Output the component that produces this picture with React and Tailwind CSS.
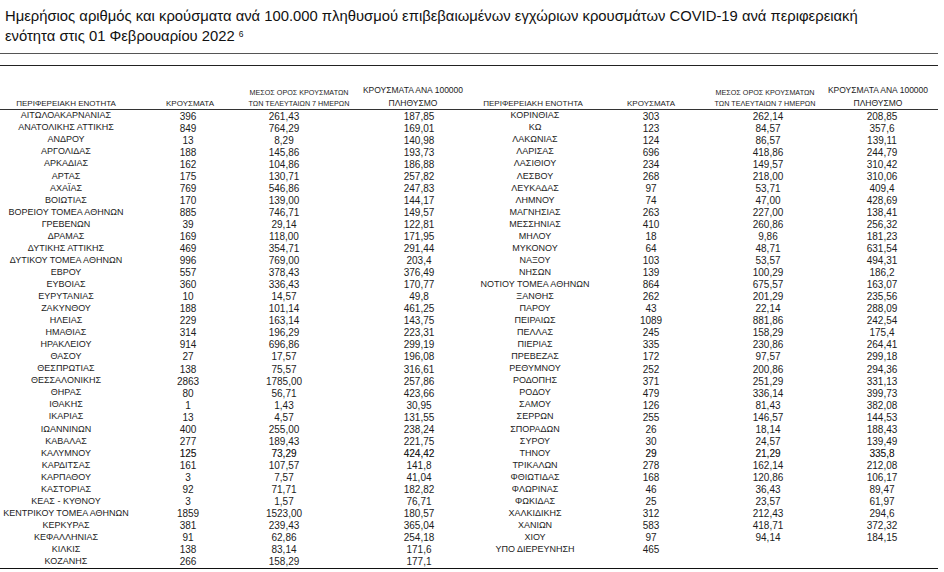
import React from "react";

const leftRows = [
  ["ΑΙΤΩΛΟΑΚΑΡΝΑΝΙΑΣ", "396", "261,43", "187,85"],
  ["ΑΝΑΤΟΛΙΚΗΣ ΑΤΤΙΚΗΣ", "849", "764,29", "169,01"],
  ["ΑΝΔΡΟΥ", "13", "8,29", "140,98"],
  ["ΑΡΓΟΛΙΔΑΣ", "188", "145,86", "193,73"],
  ["ΑΡΚΑΔΙΑΣ", "162", "104,86", "186,88"],
  ["ΑΡΤΑΣ", "175", "130,71", "257,82"],
  ["ΑΧΑΪΑΣ", "769", "546,86", "247,83"],
  ["ΒΟΙΩΤΙΑΣ", "170", "139,00", "144,17"],
  ["ΒΟΡΕΙΟΥ ΤΟΜΕΑ ΑΘΗΝΩΝ", "885", "746,71", "149,57"],
  ["ΓΡΕΒΕΝΩΝ", "39", "29,14", "122,81"],
  ["ΔΡΑΜΑΣ", "169", "118,00", "171,95"],
  ["ΔΥΤΙΚΗΣ ΑΤΤΙΚΗΣ", "469", "354,71", "291,44"],
  ["ΔΥΤΙΚΟΥ ΤΟΜΕΑ ΑΘΗΝΩΝ", "996", "769,00", "203,4"],
  ["ΕΒΡΟΥ", "557", "378,43", "376,49"],
  ["ΕΥΒΟΙΑΣ", "360", "336,43", "170,77"],
  ["ΕΥΡΥΤΑΝΙΑΣ", "10", "14,57", "49,8"],
  ["ΖΑΚΥΝΘΟΥ", "188", "101,14", "461,25"],
  ["ΗΛΕΙΑΣ", "229", "163,14", "143,75"],
  ["ΗΜΑΘΙΑΣ", "314", "196,29", "223,31"],
  ["ΗΡΑΚΛΕΙΟΥ", "914", "696,86", "299,19"],
  ["ΘΑΣΟΥ", "27", "17,57", "196,08"],
  ["ΘΕΣΠΡΩΤΙΑΣ", "138", "75,57", "316,61"],
  ["ΘΕΣΣΑΛΟΝΙΚΗΣ", "2863", "1785,00", "257,86"],
  ["ΘΗΡΑΣ", "80", "56,71", "423,66"],
  ["ΙΘΑΚΗΣ", "1", "1,43", "30,95"],
  ["ΙΚΑΡΙΑΣ", "13", "4,57", "131,55"],
  ["ΙΩΑΝΝΙΝΩΝ", "400", "255,00", "238,24"],
  ["ΚΑΒΑΛΑΣ", "277", "189,43", "221,75"],
  ["ΚΑΛΥΜΝΟΥ", "125", "73,29", "424,42"],
  ["ΚΑΡΔΙΤΣΑΣ", "161", "107,57", "141,8"],
  ["ΚΑΡΠΑΘΟΥ", "3", "7,57", "41,04"],
  ["ΚΑΣΤΟΡΙΑΣ", "92", "71,71", "182,82"],
  ["ΚΕΑΣ - ΚΥΘΝΟΥ", "3", "1,57", "76,71"],
  ["ΚΕΝΤΡΙΚΟΥ ΤΟΜΕΑ ΑΘΗΝΩΝ", "1859", "1523,00", "180,57"],
  ["ΚΕΡΚΥΡΑΣ", "381", "239,43", "365,04"],
  ["ΚΕΦΑΛΛΗΝΙΑΣ", "91", "62,86", "254,18"],
  ["ΚΙΛΚΙΣ", "138", "83,14", "171,6"],
  ["ΚΟΖΑΝΗΣ", "266", "158,29", "177,1"],
];

const rightRows = [
  ["ΚΟΡΙΝΘΙΑΣ", "303", "262,14", "208,85"],
  ["ΚΩ", "123", "84,57", "357,6"],
  ["ΛΑΚΩΝΙΑΣ", "124", "86,57", "139,11"],
  ["ΛΑΡΙΣΑΣ", "696", "418,86", "244,79"],
  ["ΛΑΣΙΘΙΟΥ", "234", "149,57", "310,42"],
  ["ΛΕΣΒΟΥ", "268", "218,00", "310,06"],
  ["ΛΕΥΚΑΔΑΣ", "97", "53,71", "409,4"],
  ["ΛΗΜΝΟΥ", "74", "47,00", "428,69"],
  ["ΜΑΓΝΗΣΙΑΣ", "263", "227,00", "138,41"],
  ["ΜΕΣΣΗΝΙΑΣ", "410", "260,86", "256,32"],
  ["ΜΗΛΟΥ", "18", "9,86", "181,23"],
  ["ΜΥΚΟΝΟΥ", "64", "48,71", "631,54"],
  ["ΝΑΞΟΥ", "103", "53,57", "494,31"],
  ["ΝΗΣΩΝ", "139", "100,29", "186,2"],
  ["ΝΟΤΙΟΥ ΤΟΜΕΑ ΑΘΗΝΩΝ", "864", "675,57", "163,07"],
  ["ΞΑΝΘΗΣ", "262", "201,29", "235,56"],
  ["ΠΑΡΟΥ", "43", "22,14", "288,09"],
  ["ΠΕΙΡΑΙΩΣ", "1089", "881,86", "242,54"],
  ["ΠΕΛΛΑΣ", "245", "158,29", "175,4"],
  ["ΠΙΕΡΙΑΣ", "335", "230,86", "264,41"],
  ["ΠΡΕΒΕΖΑΣ", "172", "97,57", "299,18"],
  ["ΡΕΘΥΜΝΟΥ", "252", "200,86", "294,36"],
  ["ΡΟΔΟΠΗΣ", "371", "251,29", "331,13"],
  ["ΡΟΔΟΥ", "479", "336,14", "399,73"],
  ["ΣΑΜΟΥ", "126", "81,43", "382,08"],
  ["ΣΕΡΡΩΝ", "255", "146,57", "144,53"],
  ["ΣΠΟΡΑΔΩΝ", "26", "18,14", "188,43"],
  ["ΣΥΡΟΥ", "30", "24,57", "139,49"],
  ["ΤΗΝΟΥ", "29", "21,29", "335,8"],
  ["ΤΡΙΚΑΛΩΝ", "278", "162,14", "212,08"],
  ["ΦΘΙΩΤΙΔΑΣ", "168", "120,86", "106,17"],
  ["ΦΛΩΡΙΝΑΣ", "46", "36,43", "89,47"],
  ["ΦΩΚΙΔΑΣ", "25", "23,57", "61,97"],
  ["ΧΑΛΚΙΔΙΚΗΣ", "312", "212,43", "294,6"],
  ["ΧΑΝΙΩΝ", "583", "418,71", "372,32"],
  ["ΧΙΟΥ", "97", "94,14", "184,15"],
  ["ΥΠΟ ΔΙΕΡΕΥΝΗΣΗ", "465", "", ""],
];

// the 29th row is printed a touch heavier in the source
const HEAVY_ROW = 28;

const numCls = (heavy) =>
  heavy
    ? "shrink-0 text-center text-[10px] [text-shadow:0.15px_0_0_rgba(0,0,0,0.45)]"
    : "shrink-0 text-center text-[10px]";

const LeftRow = ({ row, heavy }) => (
  <div className="flex h-[12.05px] items-center whitespace-nowrap">
    <div className="w-[132px] shrink-0 text-center text-[9px]">{row[0]}</div>
    <div className={`ml-[16px] w-[80px] ${numCls(heavy)}`}>{row[1]}</div>
    <div className={`ml-[16px] w-[80px] ${numCls(heavy)}`}>{row[2]}</div>
    <div className={`ml-[55px] w-[80px] ${numCls(heavy)}`}>{row[3]}</div>
  </div>
);

const RightRow = ({ row, heavy }) => (
  <div className="flex h-[12.05px] items-center whitespace-nowrap">
    <div className="w-[130px] shrink-0 text-center text-[9px]">{row[0]}</div>
    <div className={`ml-[11px] w-[80px] ${numCls(heavy)}`}>{row[1]}</div>
    <div className={`ml-[37px] w-[80px] ${numCls(heavy)}`}>{row[2]}</div>
    <div className={`ml-[34px] w-[80px] ${numCls(heavy)}`}>{row[3]}</div>
  </div>
);

const App = () => {
  return (
    <div className="h-[572px] w-[944px] overflow-hidden bg-white font-['Liberation_Sans',Arial,sans-serif] text-[#1c1c1c]">
      <div className="pl-[5px] pt-[6px] text-[14.8px] leading-[20px] text-[#111]">
        <div className="whitespace-nowrap">
          Ημερήσιος αριθμός και κρούσματα ανά 100.000 πληθυσμού επιβεβαιωμένων
          εγχώριων κρουσμάτων COVID-19 ανά περιφερειακή
        </div>
        <div>
          ενότητα στις 01 Φεβρουαρίου 2022{" "}
          <sup className="text-[8.5px]">6</sup>
        </div>
      </div>

      <div className="mt-[7px] w-[938px] border-t border-[#555]" />
      <div className="mt-[11px] w-[938px] border-t border-[#222]" />

      {/* column headings */}
      <div className="flex h-[44px] w-[938px] items-end whitespace-nowrap border-b border-[#333] leading-[11px]">
        <div className="w-[132px] shrink-0 text-center text-[8px]">
          ΠΕΡΙΦΕΡΕΙΑΚΗ ΕΝΟΤΗΤΑ
        </div>
        <div className="ml-[18px] w-[80px] shrink-0 text-center text-[8px]">
          ΚΡΟΥΣΜΑΤΑ
        </div>
        <div className="ml-[13px] w-[112px] shrink-0 text-center text-[7.2px]">
          <div>ΜΕΣΟΣ ΟΡΟΣ ΚΡΟΥΣΜΑΤΩΝ</div>
          <div>ΤΩΝ ΤΕΛΕΥΤΑΙΩΝ 7 ΗΜΕΡΩΝ</div>
        </div>
        <div className="w-[116px] shrink-0 text-center text-[8.5px]">
          <div className="mb-[2px]">ΚΡΟΥΣΜΑΤΑ ΑΝΑ 100000</div>
          <div>ΠΛΗΘΥΣΜΟ</div>
        </div>

        <div className="w-[124px] shrink-0 text-center text-[8px]">
          ΠΕΡΙΦΕΡΕΙΑΚΗ ΕΝΟΤΗΤΑ
        </div>
        <div className="ml-[16px] w-[80px] shrink-0 text-center text-[8px]">
          ΚΡΟΥΣΜΑΤΑ
        </div>
        <div className="ml-[18px] w-[112px] shrink-0 text-center text-[7.2px]">
          <div>ΜΕΣΟΣ ΟΡΟΣ ΚΡΟΥΣΜΑΤΩΝ</div>
          <div>ΤΩΝ ΤΕΛΕΥΤΑΙΩΝ 7 ΗΜΕΡΩΝ</div>
        </div>
        <div className="w-[114px] shrink-0 text-center text-[8.5px]">
          <div className="mb-[2px]">ΚΡΟΥΣΜΑΤΑ ΑΝΑ 100000</div>
          <div>ΠΛΗΘΥΣΜΟ</div>
        </div>
      </div>

      <div className="flex w-[938px] border-b-[1.5px] border-[#111]">
        <div className="w-[470px] shrink-0">
          {leftRows.map((row, i) => (
            <LeftRow key={row[0]} row={row} heavy={i === HEAVY_ROW} />
          ))}
        </div>
        <div className="flex-1">
          {rightRows.map((row, i) => (
            <RightRow key={row[0]} row={row} heavy={i === HEAVY_ROW} />
          ))}
        </div>
      </div>
    </div>
  );
};

export default App;
